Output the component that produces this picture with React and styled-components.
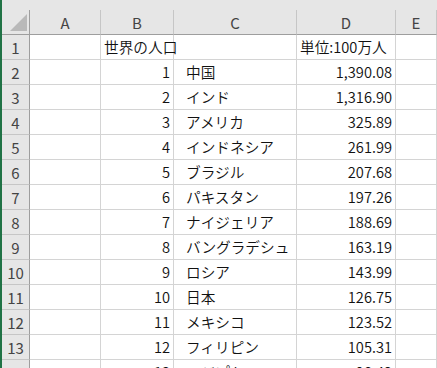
import React from "react";
import styled, { createGlobalStyle } from "styled-components";

const GlobalStyle = createGlobalStyle`
  html, body {
    margin: 0;
    padding: 0;
    background: #ffffff;
    overflow: hidden;
  }
`;

const Sheet = styled.div`
  width: 437px;
  height: 368px;
  overflow: hidden;
  box-sizing: border-box;
  border-left: 2px solid #217346;
  background: #e6e6e6;
  padding-top: 10px;
  font-family: "Noto Sans CJK JP", "Noto Sans", sans-serif;
`;

const Grid = styled.div`
  display: grid;
  grid-template-columns: 28px 71px 73px 123px 99px 1fr;
  grid-auto-rows: 25px;
  background: #ffffff;
`;

// cells are transparent so text can run over into the next empty cell, like Excel
const Cell = styled.div`
  box-sizing: border-box;
  display: flex;
  align-items: center;
  border-right: 1px solid #d4d4d4;
  border-bottom: 1px solid #d4d4d4;
  font-size: 14.67px;
  font-weight: 350;
  line-height: 1;
  color: #111;
  white-space: nowrap;
  min-width: 0;
  justify-content: ${(p) => (p.$right ? "flex-end" : "flex-start")};
  padding: ${(p) => (p.$right ? "0 3px 0 0" : `0 0 0 ${p.$indent || 3}px`)};
`;

const Corner = styled.div`
  box-sizing: border-box;
  position: relative;
  background: #e6e6e6;
  border-right: 1px solid #9e9e9e;
  border-bottom: 1px solid #9e9e9e;
`;

const CornerTriangle = styled.div`
  position: absolute;
  right: 2px;
  bottom: 3px;
  width: 0;
  height: 0;
  border-left: 17px solid transparent;
  border-bottom: 17px solid #b9b9b9;
`;

const ColHead = styled.div`
  box-sizing: border-box;
  display: flex;
  align-items: center;
  justify-content: center;
  background: #e6e6e6;
  border-right: 1px solid #c6c6c6;
  border-bottom: 1px solid #9e9e9e;
  font-size: 15px;
  color: #444;
`;

const RowHead = styled.div`
  box-sizing: border-box;
  display: flex;
  align-items: center;
  justify-content: center;
  background: #e6e6e6;
  border-right: 1px solid #9e9e9e;
  border-bottom: 1px solid #c6c6c6;
  font-size: 15px;
  color: #444;
`;

const data = [
  ["中国", "1,390.08"],
  ["インド", "1,316.90"],
  ["アメリカ", "325.89"],
  ["インドネシア", "261.99"],
  ["ブラジル", "207.68"],
  ["パキスタン", "197.26"],
  ["ナイジェリア", "188.69"],
  ["バングラデシュ", "163.19"],
  ["ロシア", "143.99"],
  ["日本", "126.75"],
  ["メキシコ", "123.52"],
  ["フィリピン", "105.31"],
  ["エジプト", "98.42"],
];

export default function App() {
  return (
    <>
      <GlobalStyle />
      <Sheet>
        <Grid>
          <Corner>
            <CornerTriangle />
          </Corner>
          {["A", "B", "C", "D", "E"].map((c) => (
            <ColHead key={c}>{c}</ColHead>
          ))}

          <RowHead>1</RowHead>
          <Cell />
          <Cell>世界の人口</Cell>
          <Cell />
          <Cell>単位:100万人</Cell>
          <Cell />

          {data.map(([name, pop], i) => (
            <React.Fragment key={name}>
              <RowHead>{i + 2}</RowHead>
              <Cell />
              <Cell $right>{i + 1}</Cell>
              <Cell $indent={12}>{name}</Cell>
              <Cell $right>{pop}</Cell>
              <Cell />
            </React.Fragment>
          ))}
        </Grid>
      </Sheet>
    </>
  );
}
